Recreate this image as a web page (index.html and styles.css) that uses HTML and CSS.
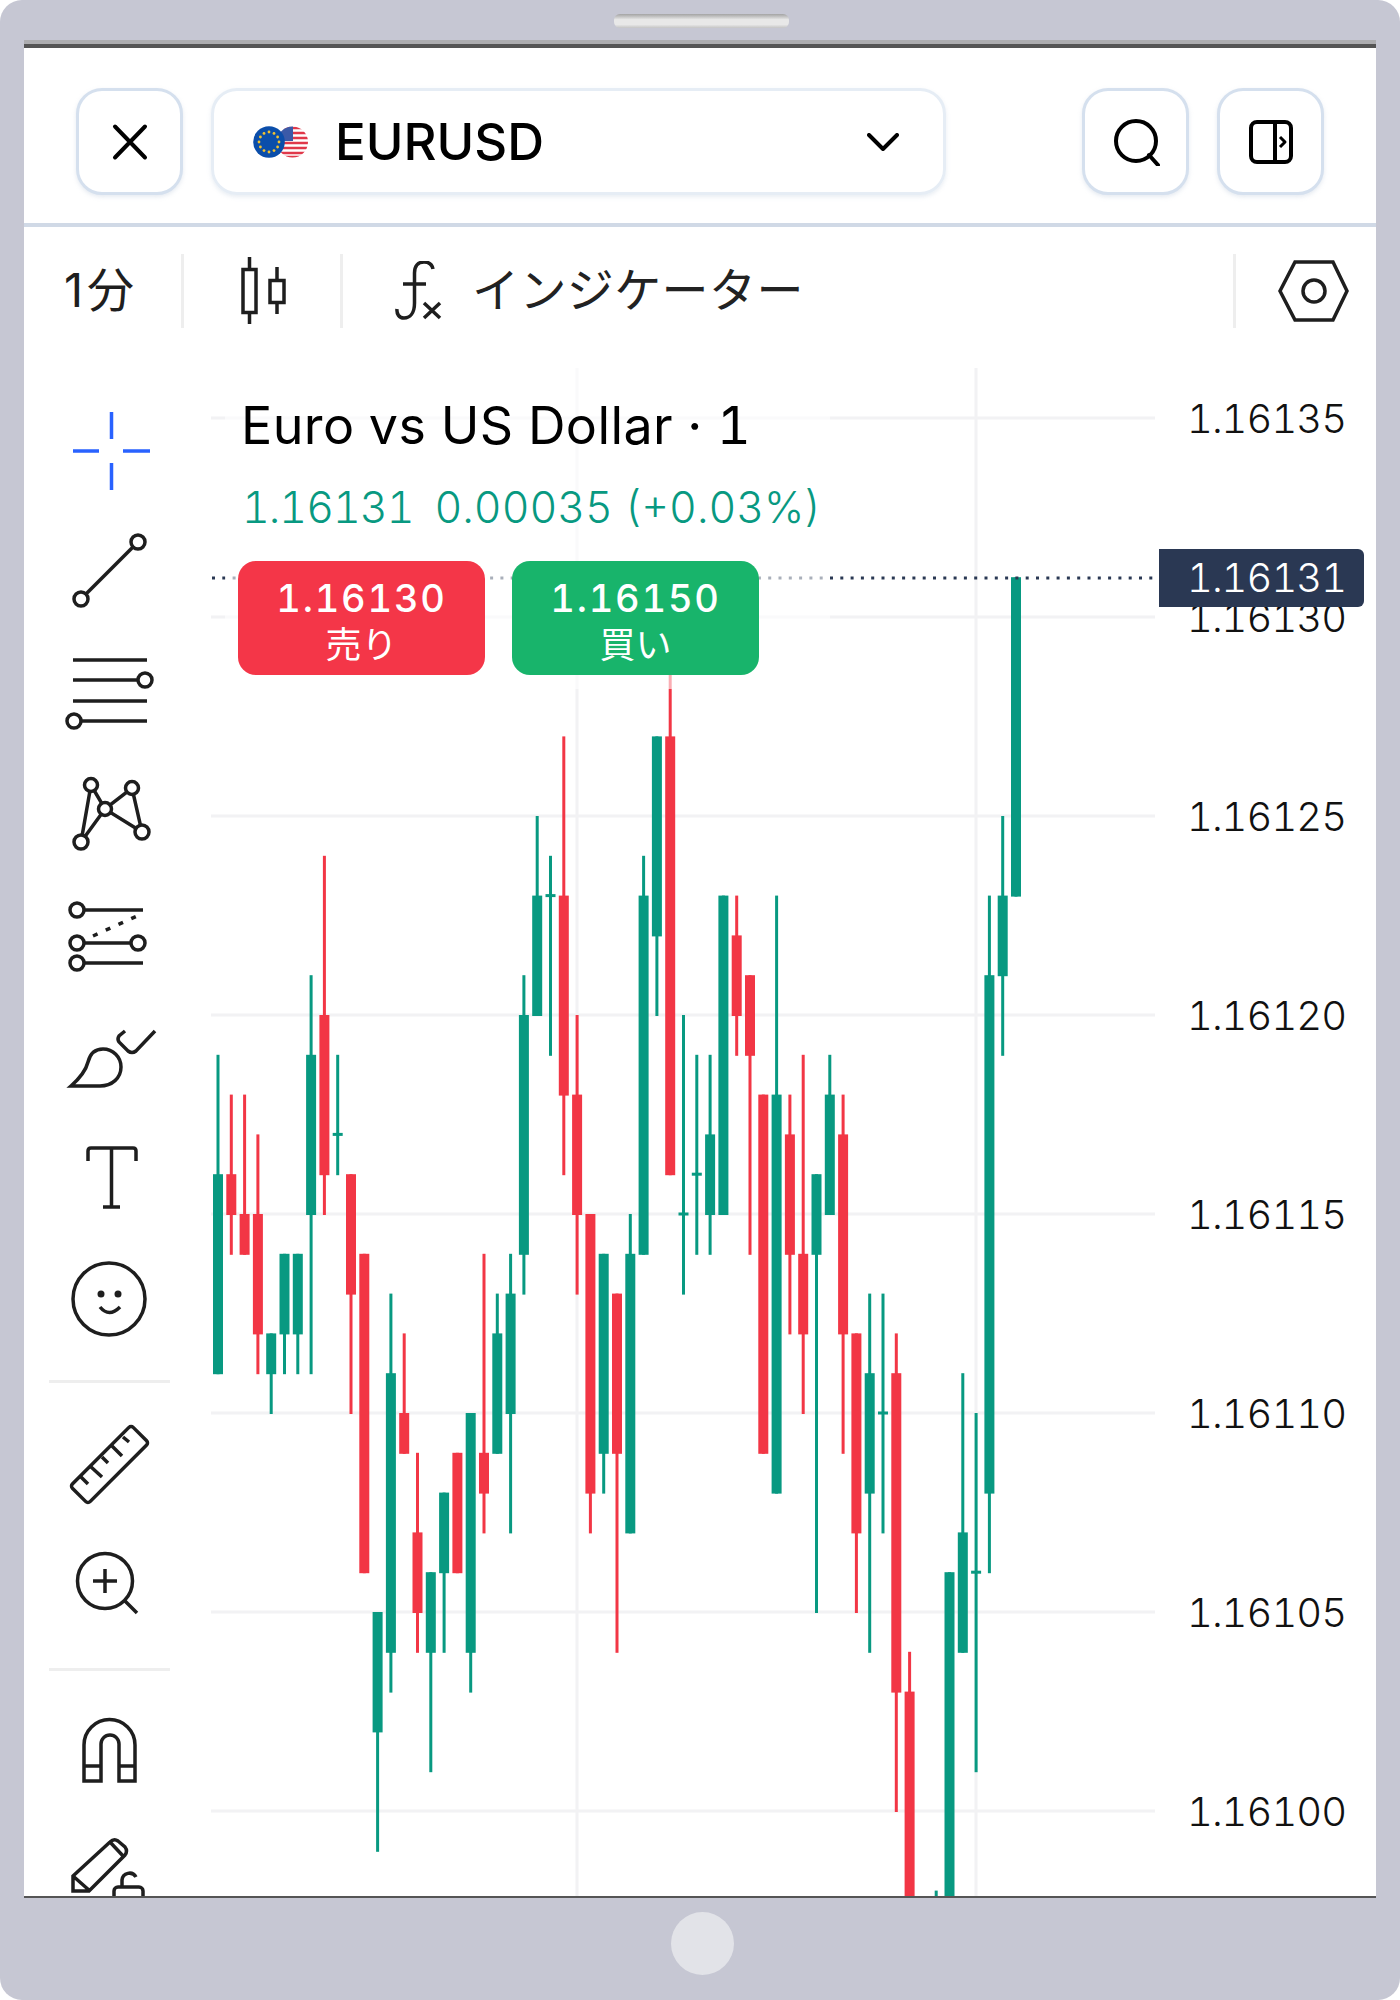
FILE: index.html
```html
<!DOCTYPE html>
<html lang="ja">
<head>
    <meta charset="UTF-8">
    <title>EURUSD Chart</title>
    <link rel="stylesheet" href="styles.css">
</head>
<body>
    <div class="device">
        <div class="speaker"></div>

        <div class="screen">
            <div class="topbar">
                <button class="icon-btn">
                    <svg width="40" height="40" viewBox="0 0 40 40"><path class="ic-black" d="M5 4.5L35 35.5M35 4.5L5 35.5"/></svg>
                </button>
                <div class="symbol-pill">
                    <svg class="flags" width="56" height="32" viewBox="0 0 56 32">
                        <defs><clipPath id="usClip"><circle cx="39.5" cy="16" r="15.5"/></clipPath></defs>
                        <g clip-path="url(#usClip)">
                            <rect x="24" y="0" width="32" height="32" fill="#fff"/>
                            <path class="us-stripes" d="M24 2H56M24 7H56M24 12H56M24 17H56M24 22H56M24 27H56M24 31H56"/>
                            <rect x="24" y="0" width="16" height="15" fill="#3b5aa8"/>
                        </g>
                        <circle cx="16" cy="16" r="15.8" fill="#0b4eaa"/>
                        <g fill="#f2c230">
                            <circle cx="16" cy="6" r="1.4"/><circle cx="21" cy="7.4" r="1.4"/><circle cx="24.6" cy="11" r="1.4"/>
                            <circle cx="26" cy="16" r="1.4"/><circle cx="24.6" cy="21" r="1.4"/><circle cx="21" cy="24.6" r="1.4"/>
                            <circle cx="16" cy="26" r="1.4"/><circle cx="11" cy="24.6" r="1.4"/><circle cx="7.4" cy="21" r="1.4"/>
                            <circle cx="6" cy="16" r="1.4"/><circle cx="7.4" cy="11" r="1.4"/><circle cx="11" cy="7.4" r="1.4"/>
                        </g>
                    </svg>
                    <span class="symbol-name">EURUSD</span>
                    <svg class="chevron" width="32" height="18" viewBox="0 0 32 18"><path class="ic-black" d="M2 2L16 16L30 2"/></svg>
                </div>
                <button class="icon-btn push-right">
                    <svg width="48" height="48" viewBox="1110 118 48 48"><circle class="ic-black" cx="1134" cy="141" r="20"/><path class="ic-black" d="M1147 155L1156 165"/></svg>
                </button>
                <button class="icon-btn">
                    <svg width="48" height="48" viewBox="1246 118 48 48">
                        <rect class="ic-black" x="1250" y="122" width="40" height="40" rx="6"/>
                        <path class="ic-black" d="M1274 122V162"/>
                        <path class="ic-black thin" d="M1279 137L1284 142L1279 147"/>
                    </svg>
                </button>
            </div>

            <div class="toolbar">
                <span class="interval">1分</span>
                <span class="tb-sep"></span>
                <svg class="candle-ic" width="46" height="70" viewBox="240 256 46 70">
                    <path class="ic" d="M249.5 257V269M249.5 313V324M277 267V280M277 303V314"/>
                    <rect class="ic" x="243" y="269.5" width="13" height="43"/>
                    <rect class="ic" x="270" y="280.5" width="14" height="22"/>
                </svg>
                <span class="tb-sep"></span>
                <svg class="fx-ic" width="48" height="60" viewBox="394 260 48 60">
                    <path class="ic" d="M433 268C432 263 428 261 424 261C418 261 414.5 265 414.5 272V302C414.5 312 410 317 404 317C399 317 396.5 313 397 308M403 283H426M424 302L440 317M440 302L424 317"/>
                </svg>
                <span class="tb-label">インジケーター</span>
                <span class="tb-sep push-right"></span>
                <svg class="hex-ic" width="72" height="62" viewBox="1278 260 72 62">
                    <path class="ic" d="M1295 262H1333L1347 291L1333 320H1295L1280 291Z"/>
                    <circle class="ic" cx="1314" cy="291" r="11"/>
                </svg>
            </div>

            <div class="workspace">
                <div class="sidebar">
                    <svg class="tool" viewBox="49 390 122 123">
                        <path class="ic-blue" d="M111.5 412V439M111.5 463V490M73 451H99M123 451H150"/>
                    </svg>
                    <svg class="tool" viewBox="49 513 122 123">
                        <path class="ic" d="M86 594L133 547"/>
                        <circle class="ic" cx="81" cy="599" r="7"/><circle class="ic" cx="138" cy="542" r="7"/>
                    </svg>
                    <svg class="tool" viewBox="49 636 122 123">
                        <path class="ic" d="M73 660H147M73 680H138M73 701H147M81 721H147"/>
                        <circle class="ic" cx="145" cy="680" r="7"/><circle class="ic" cx="74" cy="721" r="7"/>
                    </svg>
                    <svg class="tool" viewBox="49 759 122 123">
                        <path class="ic" d="M81 842L91 785L105 809L132 788L142 832L105 809L81 842"/>
                        <circle class="ic" cx="91" cy="785" r="6.5"/><circle class="ic" cx="132" cy="788" r="6.5"/>
                        <circle class="ic" cx="105" cy="809" r="6.5"/><circle class="ic" cx="142" cy="832" r="7"/>
                        <circle class="ic" cx="81" cy="842" r="7"/>
                    </svg>
                    <svg class="tool" viewBox="49 882 122 123">
                        <path class="ic" d="M84 910H143M84 943H131M84 963H143"/>
                        <path class="ic dashed" d="M93 936L137 916"/>
                        <circle class="ic" cx="77" cy="910" r="7"/><circle class="ic" cx="77" cy="943" r="7"/>
                        <circle class="ic" cx="138" cy="943" r="7"/><circle class="ic" cx="77" cy="963" r="7"/>
                    </svg>
                    <svg class="tool" viewBox="49 1005 122 123">
                        <path class="ic" d="M71 1086C80 1078 86 1070 88 1062C90 1054 95 1049 103 1049C113 1049 121 1057 121 1067C121 1078 112 1086 100 1086Z"/>
                        <path class="ic" d="M125 1031L119 1036Q117 1039 119 1042L128 1051Q132 1054 136 1051L155 1031"/>
                    </svg>
                    <svg class="tool" viewBox="49 1128 122 123">
                        <path class="ic" d="M88 1161V1151Q88 1148 91 1148H133Q136 1148 136 1151V1161M111.5 1148V1207M103 1207H120"/>
                    </svg>
                    <svg class="tool" viewBox="49 1251 122 123">
                        <circle class="ic" cx="109" cy="1299" r="36"/>
                        <circle class="ic-dot" cx="101" cy="1294" r="3.5"/><circle class="ic-dot" cx="118" cy="1294" r="3.5"/>
                        <path class="ic" d="M100 1307Q109 1318 120 1307"/>
                    </svg>

                    <div class="tool-divider"></div>

                    <svg class="tool" viewBox="49 1404 122 123">
                        <rect class="ic" x="66.5" y="1452" width="86" height="25" rx="3" transform="rotate(-45 109.5 1464.5)"/>
                        <path class="ic" d="M80 1476L88 1484M90 1466L102 1477M102 1457L108 1463M112 1446L122 1456M123 1437L129 1442"/>
                    </svg>
                    <svg class="tool" viewBox="49 1527 122 123">
                        <circle class="ic" cx="105" cy="1581" r="27.5"/>
                        <path class="ic" d="M93 1581H117M105 1569V1593M125 1601L137 1613"/>
                    </svg>

                    <div class="tool-divider second"></div>

                    <svg class="tool" viewBox="49 1690 122 123">
                        <path class="ic" d="M84 1781V1745A25.5 25.5 0 0 1 135 1745V1781H119V1744A9 9 0 0 0 101 1744V1781ZM84 1766H101M119 1766H135"/>
                    </svg>
                    <svg class="tool" viewBox="49 1813 122 123">
                        <path class="ic" d="M73 1891V1876L110 1842Q114 1838 118 1841L125 1847Q128 1851 125 1855L89 1891ZM110 1842L124 1857M73 1876L90 1891"/>
                        <path class="ic" d="M122 1887V1880A7.5 7.5 0 0 1 136 1877"/>
                        <rect class="ic" x="114" y="1887" width="29" height="20" rx="4"/>
                    </svg>
                </div>

                <div class="chart">
                    <svg id="chartSvg" class="chart-canvas" viewBox="211 355 1165 1541"></svg>

                    <div class="legend">
                        <div class="legend-title">Euro vs US Dollar · 1</div>
                        <div class="legend-values"><span class="legend-last">1.16131</span><span>0.00035 (+0.03%)</span></div>
                        <div class="trade-btns">
                            <div class="trade-btn sell"><span class="trade-price">1.16130</span><span class="trade-label">売り</span></div>
                            <div class="trade-btn buy"><span class="trade-price">1.16150</span><span class="trade-label">買い</span></div>
                        </div>
                    </div>

                    <div class="price-axis">
                        <div class="price">1.16135</div>
                        <div class="price">1.16130</div>
                        <div class="price">1.16125</div>
                        <div class="price">1.16120</div>
                        <div class="price">1.16115</div>
                        <div class="price">1.16110</div>
                        <div class="price">1.16105</div>
                        <div class="price">1.16100</div>
                    </div>
                    <div class="last-price">1.16131</div>
                </div>
            </div>
        </div>

        <div class="home-btn"></div>
    </div>

    <script src="chart.js"></script>
</body>
</html>
```

FILE: styles.css
```css
* {
    box-sizing: border-box;
}
body {
    margin: 0;
    background: #fff;
    font-family: Inter, "Noto Sans CJK JP", sans-serif;
    font-variant-numeric: tabular-nums;
    color: #000;
}
.device {
    width: 1400px;
    height: 2000px;
    background: #c6c7d3;
    border-radius: 22px;
    padding-top: 14px;
}
.speaker {
    width: 175px;
    height: 14px;
    margin: 0 0 12px 614px;
    border-radius: 6px;
    background: linear-gradient(#a3a3a3, #e8e8e8 40%, #e8e8e8 75%, #c4c4c4);
}
.screen {
    width: 1352px;
    height: 1858px;
    margin: 0 auto;
    background: #fff;
    overflow: hidden;
    border-top: 4px solid #adadb0;
    border-bottom: 2px solid #555;
    display: flex;
    flex-direction: column;
}
.topbar {
    flex: none;
    height: 183px;
    border-top: 4px solid #555;
    border-bottom: 4px solid #d0d9e6;
    padding: 12px 52px 0;
    display: flex;
    align-items: center;
    gap: 28px;
}
.icon-btn {
    width: 107px;
    height: 107px;
    background: #fff;
    border: 3px solid #d5e0ee;
    border-radius: 26px;
    box-shadow: 0 2px 4px rgba(180, 195, 215, 0.35);
    display: flex;
    align-items: center;
    justify-content: center;
    padding: 0;
}
.push-right {
    margin-left: auto;
}
.symbol-pill {
    width: 735px;
    height: 107px;
    border: 3px solid #e6edf5;
    border-radius: 26px;
    box-shadow: 0 2px 4px rgba(180, 195, 215, 0.3);
    display: flex;
    align-items: center;
    padding-left: 39px;
    padding-right: 44px;
}
.flags {
    flex: none;
}
.symbol-name {
    margin-left: 26px;
    font-size: 51px;
    font-weight: 500;
    line-height: 1;
}
.chevron {
    margin-left: auto;
}
.ic, .ic-black, .ic-blue {
    fill: none;
    stroke-width: 3.5;
}
circle.ic {
    fill: #fff;
}
.ic {
    stroke: #1e1e1e;
}
.ic-black {
    stroke: #000;
    stroke-width: 4;
    stroke-linecap: round;
    stroke-linejoin: round;
}
.ic-black.thin {
    stroke-width: 3;
    stroke-linecap: butt;
}
.ic-blue {
    stroke: #2962ff;
}
.ic-dot {
    fill: #1e1e1e;
}
.dashed {
    stroke-dasharray: 5 9;
}
.us-stripes {
    stroke: #e0384a;
    stroke-width: 2.6;
    fill: none;
}

.toolbar {
    flex: none;
    height: 128px;
    display: flex;
    align-items: center;
    padding-left: 40px;
    padding-right: 26px;
}
.interval {
    width: 117px;
    font-size: 47px;
    font-weight: 400;
    font-variant-numeric: normal;
    letter-spacing: 4px;
    line-height: 60px;
    margin-top: -3px;
    color: #1e1e1e;
}
.tb-sep {
    width: 3px;
    height: 74px;
    background: #eee;
    flex: none;
}
.candle-ic {
    margin: 0 54px 0 56px;
}
.fx-ic {
    margin-left: 51px;
    margin-right: 30px;
}
.tb-label {
    font-size: 47px;
    font-weight: 400;
    letter-spacing: 0.4px;
    line-height: 60px;
    margin-top: -2px;
    color: #222;
}
.hex-ic {
    margin-left: 42px;
}

.workspace {
    flex: 1;
    display: flex;
    min-height: 0;
}
.sidebar {
    flex: none;
    width: 187px;
    padding-top: 35px;
    padding-left: 25px;
}
.tool {
    display: block;
    width: 122px;
    height: 123px;
    overflow: hidden;
}
.tool-divider {
    width: 121px;
    height: 3px;
    background: #eee;
    margin: 6px 0 21px;
}
.tool-divider.second {
    margin: 18px 0 19px;
}

.chart {
    flex: 1;
    position: relative;
}
.chart-canvas {
    position: absolute;
    left: 0;
    top: 0;
    width: 1165px;
    height: 1541px;
}
.legend {
    position: absolute;
    left: 14px;
    top: 13px;
    width: 605px;
    height: 321px;
    padding: 23px 0 0 16px;
    background: rgba(255, 255, 255, 0.6);
}
.legend-title {
    font-size: 52px;
    font-weight: 400;
    line-height: 70px;
    letter-spacing: 0.4px;
    white-space: nowrap;
}
.legend-values {
    margin-top: 16px;
    padding-left: 1px;
    color: #089981;
    font-size: 43px;
    font-weight: 300;
    line-height: 60px;
    display: flex;
    gap: 21px;
    white-space: nowrap;
}
.legend-last {
    letter-spacing: -1px;
}
.trade-btns {
    position: absolute;
    left: 13px;
    top: 193px;
    display: flex;
    gap: 27px;
}
.trade-btn {
    width: 247px;
    height: 114px;
    border-radius: 18px;
    color: #fff;
    display: flex;
    flex-direction: column;
    align-items: center;
    padding-top: 14px;
}
.trade-btn.sell {
    background: #f43648;
}
.trade-btn.buy {
    background: #18b46b;
}
.trade-price {
    font-size: 38px;
    font-weight: 500;
    line-height: 46px;
    letter-spacing: 1.8px;
}
.trade-label {
    font-size: 36px;
    font-weight: 400;
    line-height: 44px;
    margin-top: 2px;
}
.price-axis {
    position: absolute;
    left: 976px;
    top: -36px;
}
.price {
    height: 199px;
    line-height: 199px;
    font-size: 40px;
    font-weight: 300;
    letter-spacing: -1px;
    color: #111;
}
.last-price {
    position: absolute;
    left: 948px;
    top: 194px;
    width: 205px;
    height: 58px;
    background: #2a3853;
    border-radius: 0 6px 6px 0;
    color: #fff;
    font-size: 40px;
    font-weight: 300;
    letter-spacing: -1px;
    line-height: 58px;
    padding-left: 28px;
}
.home-btn {
    width: 63px;
    height: 63px;
    border-radius: 50%;
    background: #e2e3e8;
    margin: 14px 0 0 671px;
}
```

FILE: chart.js
```js
// candles: [high, top of body, bottom of body, low, up?]  values are grid steps below 1.16135
const candles = [
    [16, 19, 24, 24, 1], [17, 19, 20, 21, 0], [17, 20, 21, 21, 0], [18, 20, 23, 24, 0],
    [23, 23, 24, 25, 1], [21, 21, 23, 24, 1], [21, 21, 23, 24, 1], [14, 16, 20, 24, 1],
    [11, 15, 19, 20, 0], [16, 18, 18, 19, 1], [19, 19, 22, 25, 0], [21, 21, 29, 29, 0],
    [30, 30, 33, 36, 1], [22, 24, 31, 32, 1], [23, 25, 26, 26, 0], [26, 28, 30, 31, 0],
    [29, 29, 31, 34, 1], [27, 27, 29, 31, 1], [26, 26, 29, 29, 0], [25, 25, 31, 32, 1],
    [21, 26, 27, 28, 0], [22, 23, 26, 26, 1], [21, 22, 25, 28, 1], [14, 15, 21, 22, 1],
    [10, 12, 15, 15, 1], [11, 12, 12, 16, 1], [8, 12, 17, 19, 0], [15, 17, 20, 22, 0],
    [20, 20, 27, 28, 0], [21, 21, 26, 27, 1], [22, 22, 26, 31, 0], [20, 21, 28, 28, 1],
    [11, 12, 21, 21, 1], [8, 8, 13, 15, 1], [6, 8, 19, 19, 0], [15, 20, 20, 22, 1],
    [16, 19, 19, 21, 1], [16, 18, 20, 21, 1], [12, 12, 20, 20, 1], [12, 13, 15, 16, 0],
    [14, 14, 16, 21, 0], [17, 17, 26, 26, 0], [12, 17, 27, 27, 1], [17, 18, 21, 23, 0],
    [16, 21, 23, 25, 0], [19, 19, 21, 30, 1], [16, 17, 20, 20, 1], [17, 18, 23, 26, 0],
    [23, 23, 28, 30, 0], [22, 24, 27, 31, 1], [22, 25, 25, 28, 1], [23, 24, 32, 35, 0],
    [31, 32, 40, 40, 0], null, [37, 40, 40, 40, 1], [29, 29, 40, 40, 1],
    [24, 28, 31, 31, 1], [25, 29, 29, 34, 1], [12, 14, 27, 29, 1], [10, 12, 14, 16, 1],
    [4, 4, 12, 12, 1]
];

const svgNs = 'http://www.w3.org/2000/svg';
const svg = document.getElementById('chartSvg');

function addRect(x, y, w, h, fill) {
    const r = document.createElementNS(svgNs, 'rect');
    r.setAttribute('x', x);
    r.setAttribute('y', y);
    r.setAttribute('width', w);
    r.setAttribute('height', h);
    r.setAttribute('fill', fill);
    svg.appendChild(r);
}

function levelY(k) {
    return 418 + k * 39.8;
}

// grid
for (let k = 0; k <= 35; k += 5) {
    addRect(211, levelY(k) - 1.5, 944, 3, '#f2f2f4');
}
addRect(575.5, 368, 3, 1528, '#f2f2f4');
addRect(974.5, 368, 3, 1528, '#f2f2f4');

// candles
candles.forEach((c, i) => {
    if (!c) return;
    const x = 218 + i * 13.3;
    const color = c[4] ? '#089981' : '#f23645';
    addRect(x - 1.5, levelY(c[0]), 3, levelY(c[3]) - levelY(c[0]) + 1, color);
    if (c[1] === c[2]) {
        addRect(x - 5, levelY(c[1]) - 1.5, 10, 3, color);
    } else {
        addRect(x - 5, levelY(c[1]), 10, levelY(c[2]) - levelY(c[1]) + 1, color);
    }
});

// last price dotted line
for (let x = 212; x < 1155; x += 10.3) {
    addRect(x, 576.5, 3, 3, '#2a3853');
}
```
